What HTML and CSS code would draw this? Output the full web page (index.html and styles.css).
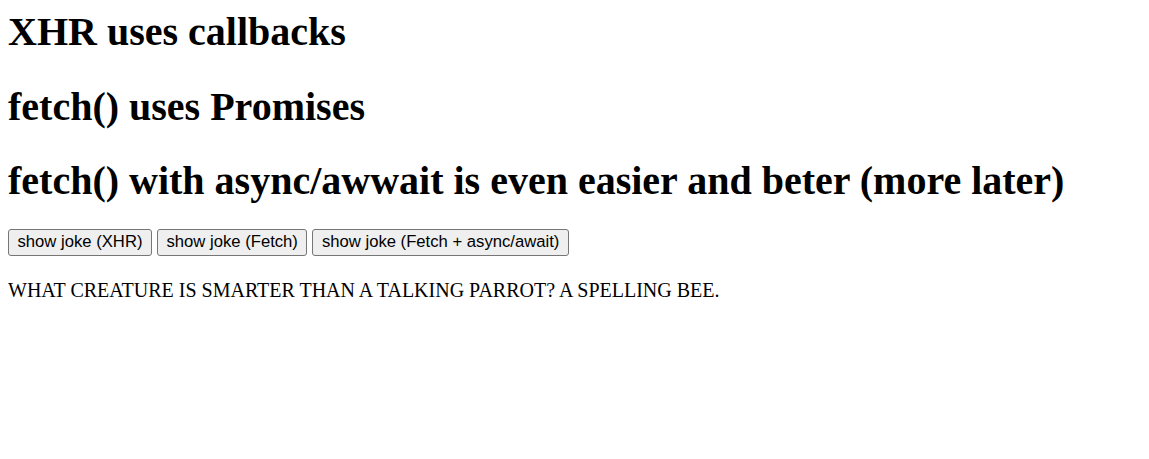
FILE: index.html
```html
<!DOCTYPE html>
<html>
<head>
<meta charset="utf-8">
<link rel="stylesheet" href="styles.css">
</head>
<body>
<h1 class="title">XHR uses callbacks</h1>
<h1 class="title">fetch() uses Promises</h1>
<h1 class="title">fetch() with async/awwait is even easier and beter (more later)</h1>
<div class="actions">
<button class="btn">show joke (XHR)</button>
<button class="btn">show joke (Fetch)</button>
<button class="btn">show joke (Fetch + async/await)</button>
</div>
<p class="joke">WHAT CREATURE IS SMARTER THAN A TALKING PARROT? A SPELLING BEE.</p>
</body>
</html>
```
FILE: styles.css
```css
body {
  margin: 8px;
  font-family: "Liberation Serif", serif;
  font-size: 20px;
  color: #000;
  background: #fff;
}
.title {
  font-size: 40px;
  font-weight: bold;
  margin: 0 0 27.7px;
}
.actions {
  display: flex;
  gap: 5px;
  align-items: flex-start;
  margin-top: -3px;
}
.btn {
  font-family: "Liberation Sans", Arial, sans-serif;
  font-size: 16.67px;
  color: #000;
  background: #efefef;
  border: 1px solid #767676;
  border-radius: 3px;
  padding: 2.4px 8.5px;
  margin: 0;
}
.joke {
  margin: 23px 0 0;
}
```
